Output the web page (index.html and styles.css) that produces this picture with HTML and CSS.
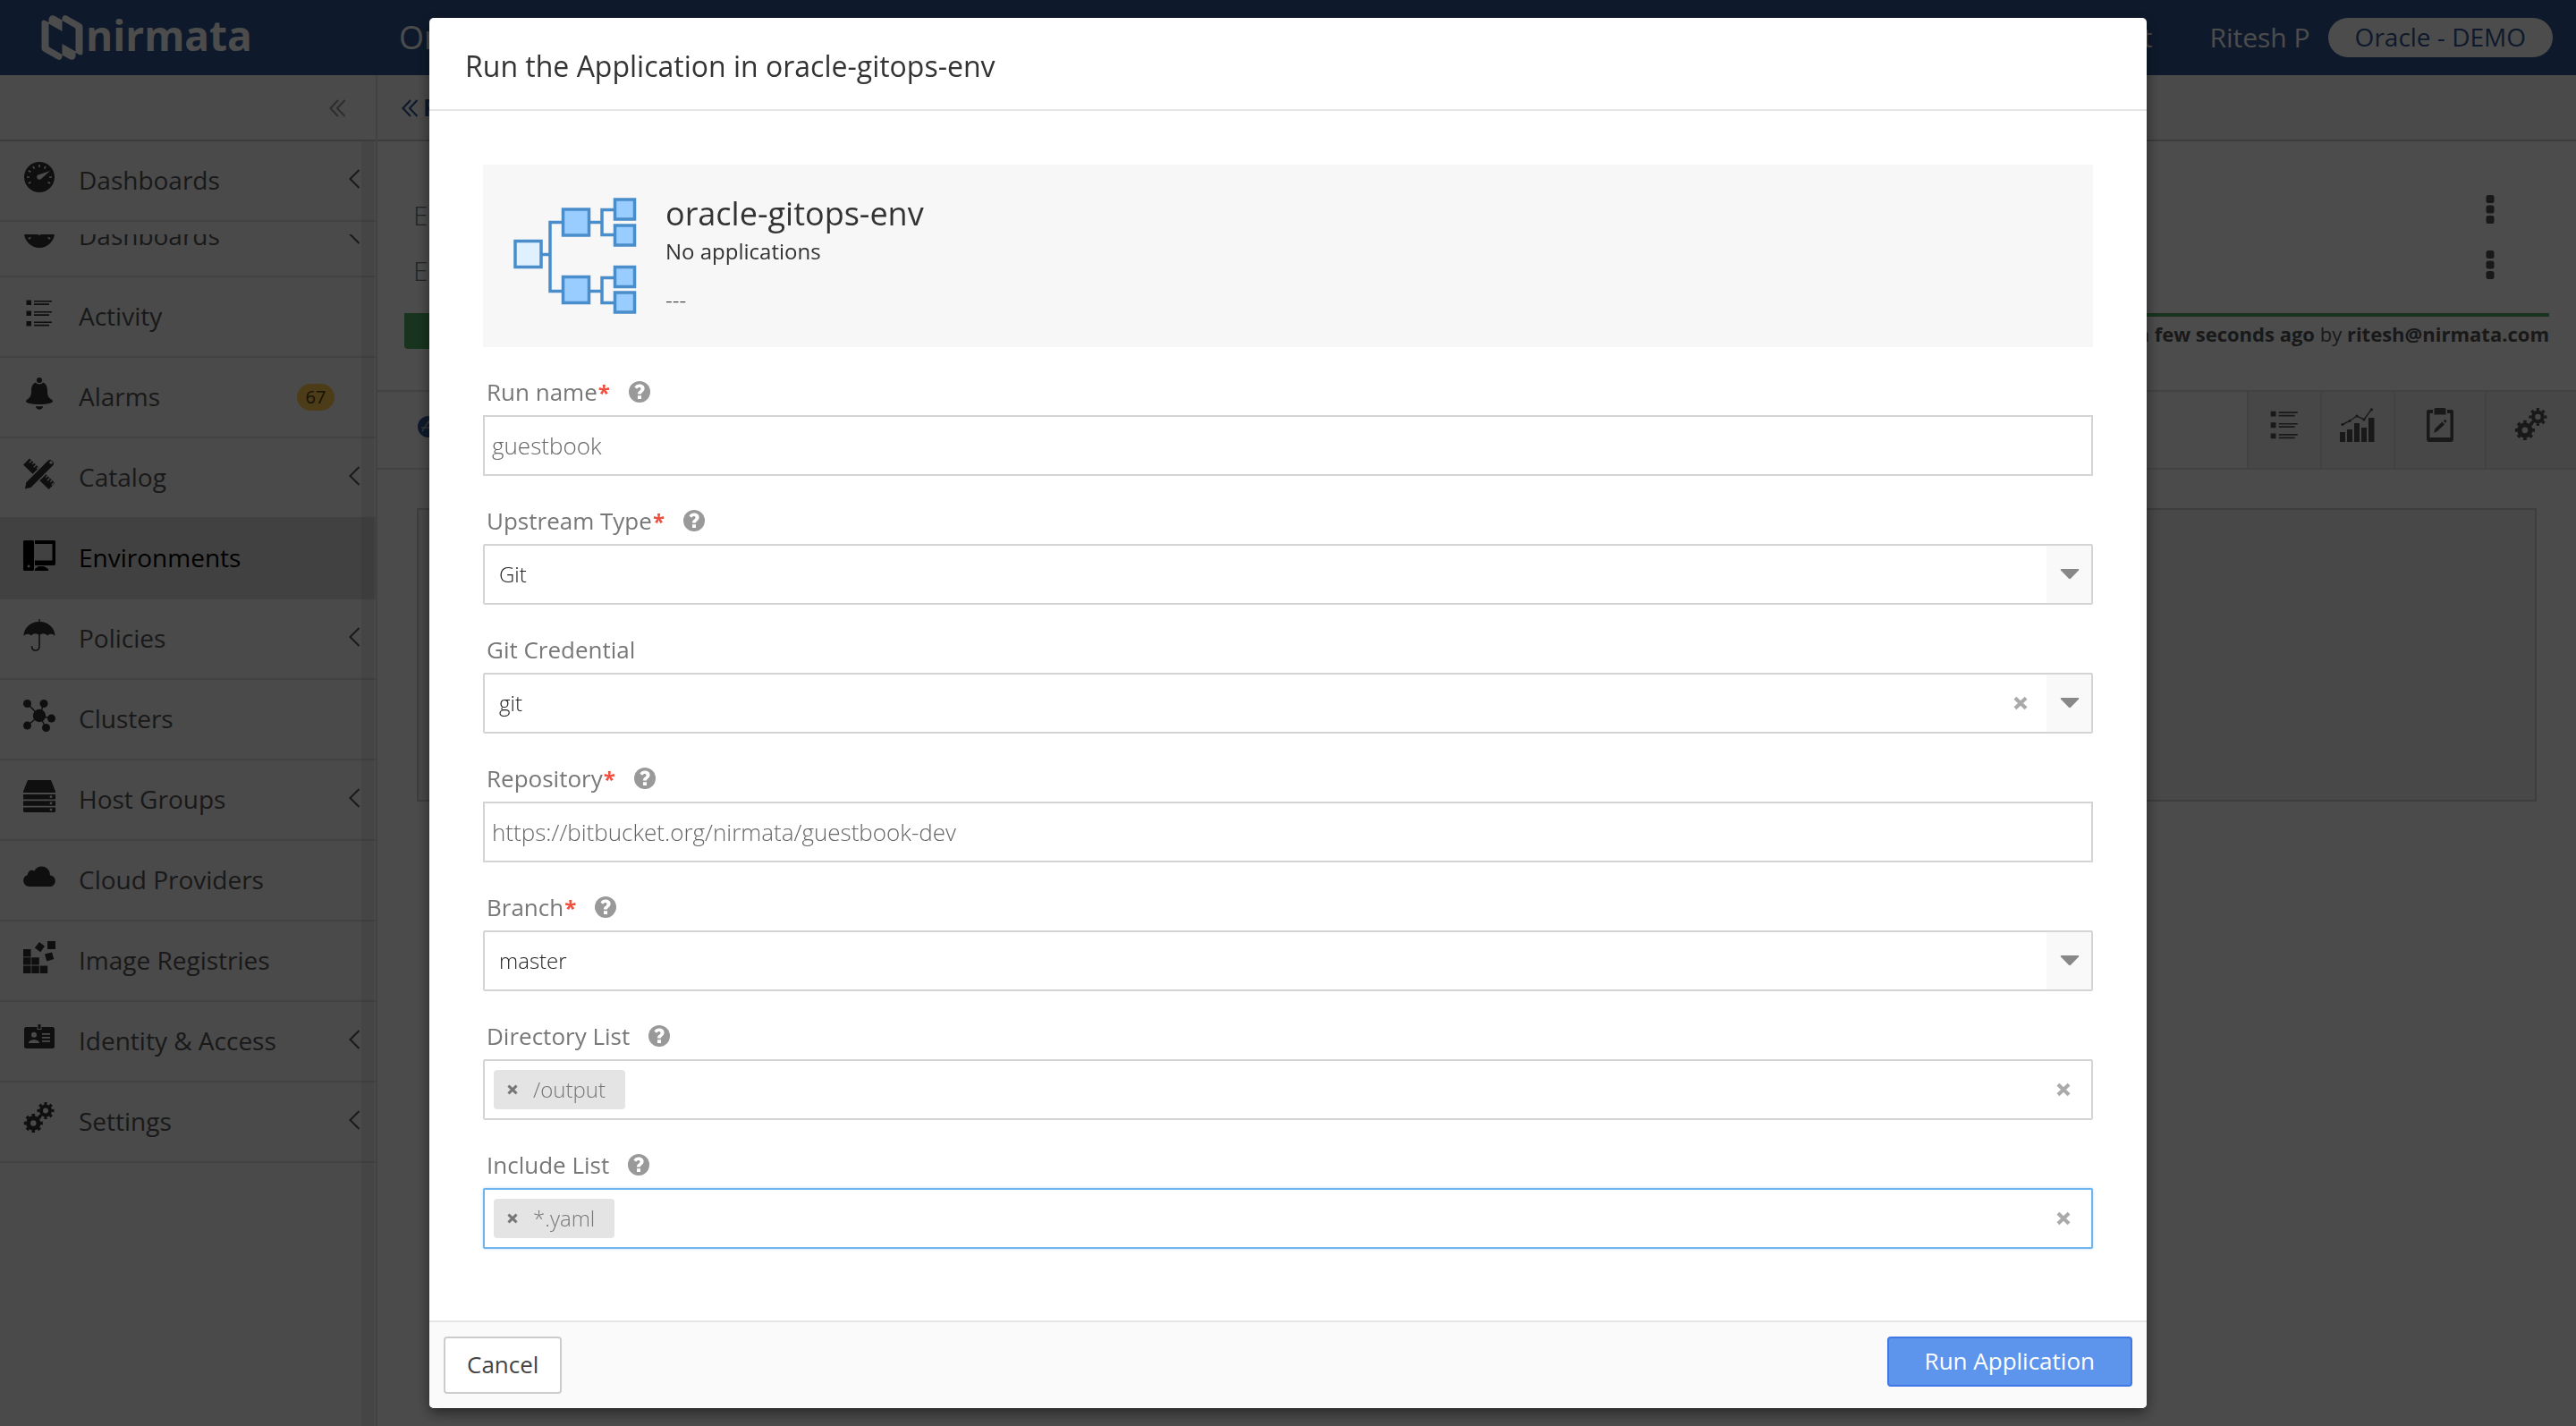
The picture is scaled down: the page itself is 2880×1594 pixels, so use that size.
FILE: index.html
```html
<!DOCTYPE html>
<html lang="en">
<head>
<meta charset="utf-8">
<title>Nirmata - Environments</title>
<link rel="stylesheet" href="styles.css">
</head>
<body>
<svg class="defs" width="0" height="0" aria-hidden="true">
  <symbol id="i-dash" viewBox="0 0 36 36"><circle cx="18" cy="18" r="17"/><g stroke="#f7f7f7" stroke-width="1.6" fill="none"><path d="M18 4v3M11 6l1.400 2.600M25 6l-1.400 2.600M5.800 10.800l2.600 1.500M4 18h3M29 18h3M5.800 25l2.600-1.500M30.200 25l-2.600-1.500"/></g><path fill="#f7f7f7" d="M30 11 16.500 15.500a2.900 2.900 0 1 0 3.800 4.300z"/></symbol>
  <symbol id="i-list" viewBox="0 0 36 36"><path d="M3.500 3.500h5.500v5.500H3.500zM3.500 15.500h5.500v5.500H3.500zM3.500 27h5.500v5.500H3.500zM12 4h20v1.600H12zM12 7.300h17v1.600H12zM12 16h20v1.600H12zM12 19.300h17v1.600H12zM12 27.500h20v1.600H12zM12 30.800h17v1.600H12z"/></symbol>
  <symbol id="i-bell" viewBox="0 0 36 36"><circle cx="18" cy="3" r="3"/><path d="M14 5.500C10 7 9 11 9 15c0 6-1.500 7.500-4 9-3 2-2.500 4 1 4.800 7 1.600 17 1.600 24 0 3.500-.8 4-2.800 1-4.800-2.500-1.500-4-3-4-9 0-4-1-8-5-9.500-1 2.500-7 2.500-8 0zM14 32c3 .4 5 .4 8 0 0 5-8 5-8 0z"/></symbol>
  <symbol id="i-tools" viewBox="0 0 36 36"><path d="M0 7.500 7 .5l28.500 27.500-7 7z"/><path stroke="#f7f7f7" stroke-width="1.300" d="m9.500 2.500-2.700 2.700M12 5 10.200 6.800M14.500 7.500l-2.700 2.700M17 10l-1.800 1.800M27 20l-1.800 1.800M29.500 22.500l-2.700 2.700M32 25l-1.800 1.800M34.500 27.500l-2.700 2.700"/><path stroke="#f7f7f7" stroke-width="1.600" d="M1 35.500 2.500 27 27 2.500C31-1.500 37.500 5 33.500 9L9 33.500z"/><circle cx="31" cy="5" r="1.800" fill="#f7f7f7"/></symbol>
  <symbol id="i-env" viewBox="0 0 36 36"><path fill-rule="evenodd" d="M1.500 2h9Q12 2 12 3.500v31Q12 36 10.500 36h-9Q0 36 0 34.500v-31Q0 2 1.500 2zM6 29.500a1.500 1.500 0 1 0 .1 0zM13 2h21.500Q36 2 36 3.500V28q0 2-1.500 2H13v-5.500h19.500V6H13zM17 31h6l5 3v2H13v-2z"/></symbol>
  <symbol id="i-umbrella" viewBox="0 0 36 36"><path d="M17.300 0h1.400v3C28 3 35.500 10 35.500 19c-2.500-3-6-3-8.500-.5-2.500-3-6.500-3-9 0-2.500-3-6.500-3-9 0C6.500 16 3 16 .5 19 .5 10 8 3 17.300 3z"/><path fill="none" stroke="currentColor" stroke-width="1.600" d="M18 18v13c0 5.500-8.500 5.500-8.500-.8"/></symbol>
  <symbol id="i-cluster" viewBox="0 0 36 36"><path stroke="currentColor" stroke-width="1.500" d="M4.500 4.500 18 18M23 4.500 18 18M18 18l13.500 3M4.500 29 18 18M18 18l7.500 13.500"/><circle cx="18" cy="18" r="7.200"/><circle cx="4.500" cy="4.500" r="4.500"/><circle cx="23" cy="4.500" r="4.500"/><circle cx="31.500" cy="21" r="4.500"/><circle cx="4.500" cy="29" r="4.500"/><circle cx="25.500" cy="31.500" r="4.500"/></symbol>
  <symbol id="i-host" viewBox="0 0 36 36"><path d="M5 0h26l5 12.500V14H0v-1.500zM0 16h36v5.500H0zM0 23.200h36v5.500H0zM0 30.400h36V35l-1 1H1l-1-1z"/><g fill="#f7f7f7"><circle cx="31" cy="18.700" r="1.400"/><circle cx="31" cy="25.900" r="1.400"/><circle cx="31" cy="33.100" r="1.400"/></g></symbol>
  <symbol id="i-cloud" viewBox="0 0 36 36"><path d="M7 29C-1.500 29-2 17.500 5 16c0-4.500 4-6.500 7.500-4.500C16 3.500 30 5 30 16.500 38 17 37.500 29 29.500 29z"/></symbol>
  <symbol id="i-blocks" viewBox="0 0 36 36"><path d="M0 9h8.500v8.500H0zM0 18.300h8.500v8.300H0zM0 27.500h8.500V36H0zM9.300 18.300h8.500v8.300H9.300zM9.300 27.500h8.500V36H9.300zM18.700 27.500h8.500V36h-8.500zM27 0h9v9h-9zM18 1l6 4.800-4.700 6.400-6.500-4.800zM24 14.500l8-2 2.300 7.500-8 2.500z"/></symbol>
  <symbol id="i-id" viewBox="0 0 36 36"><path d="M16.500 3h3v5h-3zM3.500 6h12v3h5V6h12Q35 6 35 8.500v19q0 2.500-2.500 2.500h-29Q1 30 1 27.500v-19Q1 6 3.500 6z"/><g fill="#f7f7f7"><circle cx="12" cy="14.800" r="3"/><path d="M6 24c0-5 12-5 12 0zM21 13h9v1.800h-9zM21 17h9v1.800h-9zM21 21h9v1.800h-9z"/></g></symbol>
  <symbol id="i-gears" viewBox="0 0 36 36"><g fill="none" stroke="currentColor"><circle cx="25" cy="9.500" r="5" stroke-width="4"/><circle cx="25" cy="9.500" r="8" stroke-width="3" pathLength="16" stroke-dasharray="1 1" stroke-dashoffset=".5"/><circle cx="11.300" cy="23.500" r="5.700" stroke-width="5"/><circle cx="11.300" cy="23.500" r="9" stroke-width="3" pathLength="16" stroke-dasharray="1 1" stroke-dashoffset=".5"/></g></symbol>
  <symbol id="i-chart" viewBox="0 0 40 38"><path d="M0 27h6v11H0zM8 24h6v14H8zM16 17h6v21h-6zM24 22h6v16h-6zM32 11h6.500v27H32z"/><path fill="none" stroke="currentColor" stroke-width="1.400" d="m3 18.500 8-4 8-5.500 8 4 8-11"/><circle cx="3" cy="18.500" r="1.600"/><circle cx="11" cy="14.500" r="1.600"/><circle cx="19" cy="9" r="1.600"/><circle cx="27" cy="13" r="1.600"/><circle cx="35.500" cy="1.800" r="1.600"/></symbol>
  <symbol id="i-clip" viewBox="0 0 30 38"><path fill-rule="evenodd" d="M2 2h5v4H3.500v27h23V6H23V2h5q2 0 2 2v31q0 3-3 3H3q-3 0-3-3V4q0-2 2-2z"/><path d="M10 0h10q1.500 0 1.500 1.500v6H8.500v-6Q8.500 0 10 0zM8 28l1.500-5 8-7.500 2.500 3-8 7.500zM18.800 14.500l1.700-1.500q1.500 0 1.800 2l-1.200 2z"/></symbol>
  <symbol id="i-left" viewBox="0 0 12 22"><path fill="none" stroke="currentColor" stroke-width="2" d="M11.500 1 1.500 11l10 10"/></symbol>
  <symbol id="i-dbl" viewBox="0 0 18 20"><path fill="none" stroke="currentColor" stroke-width="2.200" d="M10 1 1.500 10l8.500 9M17.500 1 9 10l8.500 9"/></symbol>
  <symbol id="i-kebab" viewBox="0 0 10 32"><rect x=".5" width="9" height="9" rx="2.500"/><rect x=".5" y="11.500" width="9" height="9" rx="2.500"/><rect x=".5" y="23" width="9" height="9" rx="2.500"/></symbol>
  <symbol id="i-help" viewBox="0 0 24 24"><circle cx="12" cy="12" r="12"/><path fill="#fff" d="M10 14.500h4c-.2-2 3.600-2.600 3.600-6.300C17.600 5 15 3.500 12 3.500c-2.500 0-4.300 1-5.600 3l2.700 2.200c1.600-2.200 4.400-2 4.400 0 0 1.900-3.900 2.400-3.500 5.800zM10 16.200h4v3.800h-4z"/></symbol>
  <symbol id="i-x" viewBox="0 0 16 16"><path fill="none" stroke="currentColor" stroke-width="4" d="m1.900 2.200 12.200 11.600M14.100 2.200 1.900 13.800"/></symbol>
  <symbol id="i-tri" viewBox="0 0 22 12"><path d="M1.500 0h19q1.500 0 .5 1.500L12 10.800q-1 .8-2 0L1 1.500Q0 0 1.500 0z"/></symbol>
</svg>

<header class="topbar">
  <a class="logo" href="#">
    <svg width="48" height="50" viewBox="46 18 47 50" aria-hidden="true"><path d="M46 27q0-4 3-3.500l5 2.500v26q0 1.500 1.500 2.300L69 62v3q-1 4-5 2.500L48 58.500q-2-1.200-2-3.500zM54 22q1.500-5 6-3.500L69 23.500V36L54 27.500zM92 59q0 4-3 3.500L84 60V34q0-1.500-1.500-2.300L69 24v-3q1-4 5-2.500l16 9q2 1.200 2 3.500zM84 64q-1.500 5-6 3.500L69 62.500V50l15 8.500z"/></svg>
    <span>nirmata</span>
  </a>
  <h1>Oracle</h1>
  <nav class="usernav">
    <a href="#">Support</a>
    <a href="#">Ritesh P</a>
    <a class="tenant" href="#">Oracle - DEMO</a>
  </nav>
</header>

<div class="shell">
  <aside class="sidebar">
    <div class="side-head"><button type="button" aria-label="Collapse"><svg width="18" height="20"><use href="#i-dbl"/></svg></button></div>
    <div class="side-scroll">
      <div class="pinned">
        <a class="item" href="#"><svg class="ic"><use href="#i-dash"/></svg><span>Dashboards</span><svg class="chev"><use href="#i-left"/></svg></a>
      </div>
      <div class="list-clip">
        <nav class="list">
          <a class="item" href="#"><svg class="ic"><use href="#i-dash"/></svg><span>Dashboards</span><svg class="chev"><use href="#i-left"/></svg></a>
          <a class="item" href="#"><svg class="ic"><use href="#i-list"/></svg><span>Activity</span></a>
          <a class="item" href="#"><svg class="ic"><use href="#i-bell"/></svg><span>Alarms</span><b class="badge">67</b></a>
          <a class="item" href="#"><svg class="ic"><use href="#i-tools"/></svg><span>Catalog</span><svg class="chev"><use href="#i-left"/></svg></a>
          <a class="item active" href="#"><svg class="ic"><use href="#i-env"/></svg><span>Environments</span></a>
          <a class="item" href="#"><svg class="ic"><use href="#i-umbrella"/></svg><span>Policies</span><svg class="chev"><use href="#i-left"/></svg></a>
          <a class="item" href="#"><svg class="ic"><use href="#i-cluster"/></svg><span>Clusters</span></a>
          <a class="item" href="#"><svg class="ic"><use href="#i-host"/></svg><span>Host Groups</span><svg class="chev"><use href="#i-left"/></svg></a>
          <a class="item" href="#"><svg class="ic"><use href="#i-cloud"/></svg><span>Cloud Providers</span></a>
          <a class="item" href="#"><svg class="ic"><use href="#i-blocks"/></svg><span>Image Registries</span></a>
          <a class="item" href="#"><svg class="ic"><use href="#i-id"/></svg><span>Identity &amp; Access</span><svg class="chev"><use href="#i-left"/></svg></a>
          <a class="item" href="#"><svg class="ic"><use href="#i-gears"/></svg><span>Settings</span><svg class="chev"><use href="#i-left"/></svg></a>
        </nav>
      </div>
      <div class="track"></div>
    </div>
  </aside>

  <main class="main">
    <div class="crumbs"><a href="#"><svg width="18" height="20"><use href="#i-dbl"/></svg>Prev</a></div>
    <section class="summary">
      <div class="row"><span>Environment</span><button type="button" aria-label="More"><svg width="10" height="32"><use href="#i-kebab"/></svg></button></div>
      <div class="row"><span>Environment</span><button type="button" aria-label="More"><svg width="10" height="32"><use href="#i-kebab"/></svg></button></div>
      <div class="status">
        <div class="state"></div>
        <p>Last updated <b>a few seconds ago</b> by <b>ritesh@nirmata.com</b></p>
      </div>
    </section>
    <div class="tools">
      <div class="tab"><svg width="24" height="24" viewBox="0 0 24 24"><circle cx="12" cy="12" r="12" fill="#2f5793"/><path fill="none" stroke="#bbb" stroke-width="1.600" d="m5 17 7-11 6 11M4 13h16"/></svg></div>
      <button type="button" class="tool" aria-label="Activity"><svg width="38" height="38"><use href="#i-list"/></svg></button>
      <button type="button" class="tool" aria-label="Charts"><svg width="40" height="38"><use href="#i-chart"/></svg></button>
      <button type="button" class="tool wide" aria-label="Notes"><svg width="30" height="38"><use href="#i-clip"/></svg></button>
      <button type="button" class="tool wide" aria-label="Settings"><svg width="38" height="38"><use href="#i-gears"/></svg></button>
    </div>
    <section class="panel"></section>
  </main>
</div>

<div class="backdrop">
  <form class="modal" role="dialog" aria-labelledby="dlg-title">
    <h2 id="dlg-title">Run the Application in oracle-gitops-env</h2>
    <div class="modal-body">
      <div class="card">
        <svg width="138" height="130" viewBox="0 0 138 130" aria-hidden="true">
          <g fill="none" stroke="#4a8dcb" stroke-width="3.500"><path d="M31 63.500h10M54 27.500H41v77h13M86 27.500h13M112 13.500H99v28h13M86 104.500h13M112 89.500H99v28h13"/></g>
          <g stroke="#4a8dcb" stroke-width="3.500" fill="#9cf"><rect x="2" y="48.500" width="29" height="29" fill="#dff0ff"/><rect x="55.500" y="13" width="29" height="29"/><rect x="55.500" y="88.500" width="29" height="29"/><rect x="113.500" y="2" width="22" height="22"/><rect x="113.500" y="31" width="22" height="22"/><rect x="113.500" y="77.500" width="22" height="22"/><rect x="113.500" y="106" width="22" height="22"/></g>
        </svg>
        <div>
          <h3>oracle-gitops-env</h3>
          <p>No applications</p>
          <p class="note">---</p>
        </div>
      </div>

      <div class="field">
        <div class="label"><label for="f-name">Run name<em>*</em></label><svg class="help"><use href="#i-help"/></svg></div>
        <input class="box text" id="f-name" type="text" value="guestbook">
      </div>
      <div class="field">
        <div class="label"><label for="f-type">Upstream Type<em>*</em></label><svg class="help"><use href="#i-help"/></svg></div>
        <div class="pick"><select class="box" id="f-type"><option>Git</option></select><span class="arrow"><svg width="22" height="12"><use href="#i-tri"/></svg></span></div>
      </div>
      <div class="field">
        <div class="label"><label for="f-cred">Git Credential</label></div>
        <div class="pick"><select class="box" id="f-cred"><option>git</option></select><button type="button" class="clear" aria-label="Clear"><svg width="16" height="16"><use href="#i-x"/></svg></button><span class="arrow"><svg width="22" height="12"><use href="#i-tri"/></svg></span></div>
      </div>
      <div class="field">
        <div class="label"><label for="f-repo">Repository<em>*</em></label><svg class="help"><use href="#i-help"/></svg></div>
        <input class="box text" id="f-repo" type="text" value="https://bitbucket.org/nirmata/guestbook-dev">
      </div>
      <div class="field">
        <div class="label"><label for="f-branch">Branch<em>*</em></label><svg class="help"><use href="#i-help"/></svg></div>
        <div class="pick"><select class="box" id="f-branch"><option>master</option></select><span class="arrow"><svg width="22" height="12"><use href="#i-tri"/></svg></span></div>
      </div>
      <div class="field">
        <div class="label"><label for="f-dir">Directory List</label><svg class="help"><use href="#i-help"/></svg></div>
        <div class="box tags"><span class="tag"><button type="button" aria-label="Remove"><svg width="12" height="12"><use href="#i-x"/></svg></button>/output</span><input id="f-dir" type="text"><button type="button" class="clear" aria-label="Clear"><svg width="16" height="16"><use href="#i-x"/></svg></button></div>
      </div>
      <div class="field">
        <div class="label"><label for="f-inc">Include List</label><svg class="help"><use href="#i-help"/></svg></div>
        <div class="box tags focused"><span class="tag"><button type="button" aria-label="Remove"><svg width="12" height="12"><use href="#i-x"/></svg></button>*.yaml</span><input id="f-inc" type="text"><button type="button" class="clear" aria-label="Clear"><svg width="16" height="16"><use href="#i-x"/></svg></button></div>
      </div>
    </div>
    <footer>
      <button type="button" class="btn cancel">Cancel</button>
      <button type="button" class="btn run">Run Application</button>
    </footer>
  </form>
</div>
</body>
</html>
```
FILE: styles.css
```css
* { box-sizing: border-box; }
html, body { height: 100%; }
body {
  margin: 0;
  display: flex;
  flex-direction: column;
  overflow: hidden;
  background: #fafafa;
  color: #555;
  font: 28px/1.3 "Open Sans", "Noto Sans", sans-serif;
}
h1, h2, h3, p { margin: 0; font-weight: 400; }
a { color: inherit; text-decoration: none; }
button { font: inherit; color: inherit; background: none; border: 0; padding: 0; }
input, select { font: inherit; }
svg { display: block; flex: none; fill: currentColor; }
.defs { position: absolute; }

/* Top bar */
.topbar {
  flex: none;
  display: flex;
  align-items: center;
  height: 84px;
  padding: 0 26px 0 46px;
  background: #2f5793;
  color: #fff;
}
.logo { display: flex; align-items: center; gap: 2px; width: 400px; }
.logo span { font-size: 46px; font-weight: 700; line-height: 50px; padding-bottom: 6px; }
.topbar h1 { font-size: 36px; }
.usernav { margin-left: auto; display: flex; align-items: center; gap: 64px; font-size: 30px; }
.usernav a { padding-bottom: 2px; }
.usernav .tenant {
  margin-left: -44px;
  padding: 0 30px 2px;
  border-radius: 22px;
  background: #fff;
  color: #2f5793;
  font-size: 28px;
  line-height: 42px;
}

/* Shell */
.shell { flex: 1; display: flex; min-height: 0; }
.sidebar {
  flex: none;
  display: flex;
  flex-direction: column;
  width: 422px;
  background: #f7f7f7;
  border-right: 2px solid #dcdcdc;
}
.side-head {
  flex: none;
  display: flex;
  align-items: center;
  justify-content: flex-end;
  height: 74px;
  padding: 2px 34px 0 0;
  border-bottom: 2px solid #c8c8c8;
  color: #999;
}
.side-scroll { flex: 1; position: relative; min-height: 0; display: flex; flex-direction: column; }
.pinned { flex: none; height: 104px; }
.list-clip { flex: 1; overflow: hidden; min-height: 0; }
.list { margin-top: -42px; }
.track { position: absolute; top: 0; bottom: 0; right: 2px; width: 14px; background: rgba(0, 0, 0, .06); }
.item {
  display: flex;
  align-items: center;
  height: 90px;
  padding: 0 18px 2px 26px;
  border-bottom: 2px solid #dedede;
}
.item .ic { width: 36px; height: 36px; margin: 0 26px 6px 0; color: #333; }
.item .chev { width: 12px; height: 22px; margin: 0 0 2px auto; }
.item.active { height: 92px; margin-top: -2px; border-top: 2px solid #d9d9d9; border-bottom-color: #d9d9d9; background: #d9d9d9; color: #000; }
.item.active .ic { color: #000; }
.badge {
  margin: 2px 28px 0 auto;
  width: 42px;
  border-radius: 15px;
  background: #ffc94f;
  color: #4a3c1a;
  font-size: 20px;
  font-weight: 400;
  line-height: 30px;
  text-align: center;
}

/* Main column */
.main { flex: 1; min-width: 0; }
.crumbs {
  height: 74px;
  display: flex;
  align-items: center;
  padding: 2px 0 0 27px;
  background: #f7f7f7;
  border-bottom: 2px solid #c8c8c8;
  color: #2f5793;
  font-size: 26px;
  font-weight: 700;
}
.crumbs a { display: flex; align-items: center; gap: 6px; }
.summary { height: 278px; padding: 51px 30px 0; background: #fff; }
.row { display: flex; align-items: center; justify-content: space-between; height: 62px; padding: 0 61px 0 10px; font-size: 30px; font-weight: 300; color: #777; }
.row button { padding-bottom: 12px; color: #555; }
.status { display: flex; justify-content: space-between; margin-top: 17px; border-top: 4px solid #50ad68; font-size: 22px; }
.state { width: 160px; height: 36px; border-radius: 0 0 4px 4px; background: #50ad68; }
.status p { padding-top: 5px; }
.tools { display: flex; height: 89px; border: solid #dedede; border-width: 2px 0; }
.tab { flex: 1; display: flex; align-items: center; padding: 0 0 8px 45px; }
.tool { width: 82px; display: flex; align-items: center; justify-content: center; padding-bottom: 12px; border-left: 2px solid #dedede; background: #eee; }
.tool.wide { width: 102px; }
.panel { height: 328px; margin: 43px 44px 0; border: 2px solid #ccc; background: #f2f2f2; }

/* Dialog */
.backdrop {
  position: fixed;
  inset: 0;
  padding: 20px;
  background: rgba(0, 0, 0, .7);
}
.modal {
  max-width: 1920px;
  margin: 0 auto;
  overflow: hidden;
  border-radius: 5px;
  background: #fff;
  color: #333;
  box-shadow: 0 5px 15px rgba(0, 0, 0, .5);
}
.modal h2 { padding: 32px 40px 26px; border-bottom: 2px solid #e5e5e5; font-size: 32px; line-height: 44px; }
.modal-body { display: flex; flex-direction: column; gap: 32px; padding: 60px 60px 80px; }
.card { display: flex; gap: 32px; padding: 33px 34px 37px; background: #f7f7f7; }
.card svg { margin-top: 4px; }
.card h3 { margin-bottom: 4px; font-size: 36px; line-height: 44px; }
.card p { font-size: 24px; line-height: 32px; }
.card .note { margin-top: 22px; font-weight: 300; }
.label { display: flex; align-items: center; gap: 21px; height: 36px; margin-bottom: 8px; padding-left: 4px; color: #777; font-size: 26px; line-height: 36px; }
.label em { margin-left: 1px; color: #f04e3e; font-size: 24px; font-style: normal; font-weight: 700; line-height: 1; }
.help { width: 24px; height: 24px; color: #999; }
.box {
  display: block;
  width: 100%;
  height: 68px;
  border: 2px solid #d4d4d4;
  border-radius: 2px;
  background: #fff;
  outline: 0;
  font-size: 24px;
  font-weight: 300;
}
.box.text { padding: 0 8px; border-radius: 0; color: #666; font-size: 26px; }
.pick { display: grid; grid-template-columns: 1fr 34px 12px 52px; }
.pick > * { grid-row: 1; }
.pick select { grid-column: 1 / -1; padding: 0 16px; appearance: none; color: #222; }
.arrow { grid-column: 4; display: flex; align-items: center; padding-left: 15px; margin: 2px 2px 2px 0; background: #f9f9f9; color: #888; pointer-events: none; }
.clear { color: #aaa; }
.pick .clear { grid-column: 2; justify-self: center; }
.tags { display: flex; align-items: center; padding: 0 23px 0 10px; }
.tags input { flex: 1; min-width: 0; border: 0; outline: 0; background: none; }
.tags.focused { border-color: #6eb5f0; box-shadow: 0 0 3px rgba(110, 181, 240, .5); }
.tag { display: flex; align-items: center; gap: 17px; padding: 0 22px 0 15px; border-radius: 4px; background: #e4e4e4; color: #777; line-height: 44px; }
.tag button { color: #777; }
.modal footer { display: flex; align-items: flex-start; justify-content: space-between; padding: 16px; border-top: 2px solid #e5e5e5; background: #fafafa; }
.btn { border: 2px solid; border-radius: 4px; font-size: 26px; }
.cancel { height: 64px; padding: 0 24px; border-color: #ccc; background: #fff; color: #444; }
.run { height: 56px; padding: 0 40px; border-color: #3f78e4; background: #5e95ec; color: #fff; }
```
